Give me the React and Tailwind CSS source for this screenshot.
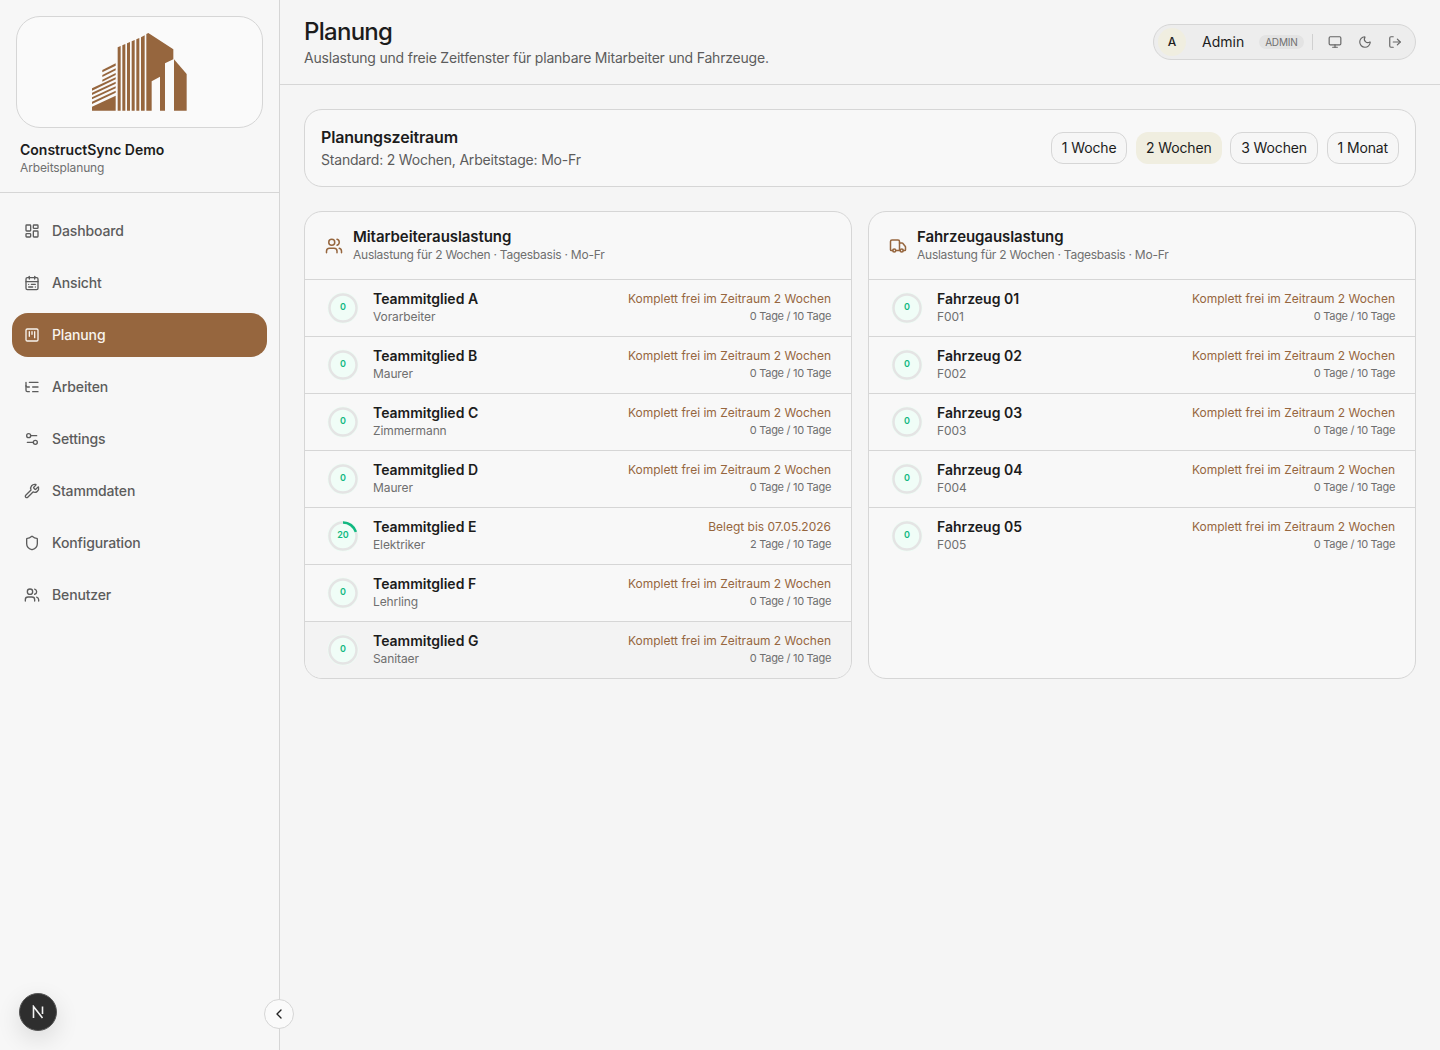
import React from "react";
import {
  LayoutDashboard,
  CalendarRange,
  SquareKanban,
  ListTree,
  Settings2,
  Wrench,
  Shield,
  Users,
  Truck,
  Monitor,
  Moon,
  LogOut,
  ChevronLeft,
} from "lucide-react";

const navItems = [
  { label: "Dashboard", icon: LayoutDashboard },
  { label: "Ansicht", icon: CalendarRange },
  { label: "Planung", icon: SquareKanban, active: true },
  { label: "Arbeiten", icon: ListTree },
  { label: "Settings", icon: Settings2 },
  { label: "Stammdaten", icon: Wrench },
  { label: "Konfiguration", icon: Shield },
  { label: "Benutzer", icon: Users },
];

const ranges = [
  { label: "1 Woche" },
  { label: "2 Wochen", active: true },
  { label: "3 Wochen" },
  { label: "1 Monat" },
];

const FREE = "Komplett frei im Zeitraum 2 Wochen";

const members = [
  { name: "Teammitglied A", sub: "Vorarbeiter", status: FREE, days: 0, pct: 0 },
  { name: "Teammitglied B", sub: "Maurer", status: FREE, days: 0, pct: 0 },
  { name: "Teammitglied C", sub: "Zimmermann", status: FREE, days: 0, pct: 0 },
  { name: "Teammitglied D", sub: "Maurer", status: FREE, days: 0, pct: 0 },
  { name: "Teammitglied E", sub: "Elektriker", status: "Belegt bis 07.05.2026", days: 2, pct: 20 },
  { name: "Teammitglied F", sub: "Lehrling", status: FREE, days: 0, pct: 0 },
  { name: "Teammitglied G", sub: "Sanitaer", status: FREE, days: 0, pct: 0, hover: true },
];

const vehicles = [
  { name: "Fahrzeug 01", sub: "F001", status: FREE, days: 0, pct: 0 },
  { name: "Fahrzeug 02", sub: "F002", status: FREE, days: 0, pct: 0 },
  { name: "Fahrzeug 03", sub: "F003", status: FREE, days: 0, pct: 0 },
  { name: "Fahrzeug 04", sub: "F004", status: FREE, days: 0, pct: 0 },
  { name: "Fahrzeug 05", sub: "F005", status: FREE, days: 0, pct: 0 },
];

function Logo() {
  return (
    <svg width="120" height="100" viewBox="0 6 360 300" fill="#96663e">
      {/* left stepped block */}
      <polygon points="67,150 107,130 107,137 67,157" />
      <polygon points="67,165 107,145 107,151 67,171" />
      <polygon points="67,179 107,159 107,165 67,185" />
      <polygon points="36,205 107,172 107,178 36,212" />
      <polygon points="36,218 107,185 107,191 36,225" />
      <polygon points="36,232 107,199 107,205 36,238" />
      <polygon points="36,245 107,212 107,218 36,252" />
      <polygon points="36,260 107,227 107,272 36,272" />
      {/* vertical stripes */}
      <polygon points="113,82 122,78 122,272 113,272" />
      <polygon points="127,76 136,72 136,272 127,272" />
      <polygon points="141,70 150,66 150,272 141,272" />
      <polygon points="155,64 164,60 164,272 155,272" />
      <polygon points="169,58 178,54 178,272 169,272" />
      <polygon points="183,52 194,46 194,272 183,272" />
      {/* main tower */}
      <polygon points="199,42 205,39 280,88 280,118 255,130 255,272 240,272 240,170 215,184 215,272 199,272" />
      <polygon points="282,118 320,162 320,272 282,272" />
    </svg>
  );
}

function Ring({ pct }) {
  const r = 13.5;
  const len = 2 * Math.PI * r;
  return (
    <div className="relative h-8 w-8 shrink-0">
      <svg width="32" height="32" viewBox="0 0 32 32" className="-rotate-90">
        <circle cx="16" cy="16" r="15.5" fill="#eefcf5" />
        <circle cx="16" cy="16" r={r} fill="#f0fdf7" stroke="#e4e4e4" strokeWidth="2.5" />
        {pct > 0 && (
          <circle
            cx="16"
            cy="16"
            r={r}
            fill="none"
            stroke="#10b981"
            strokeWidth="2.5"
            strokeDasharray={`${(len * pct) / 100} ${len}`}
          />
        )}
      </svg>
      <span className="absolute inset-0 flex items-center justify-center pb-[2px] text-[9px] font-semibold text-[#10b981]">
        {pct}
      </span>
    </div>
  );
}

function Row({ item, last }) {
  return (
    <div
      className={`flex items-center justify-between pl-[22px] pr-5 ${
        last ? "h-14" : "h-[57px] border-b border-[#d6d6d6]"
      } ${item.hover ? "rounded-b-[18px] bg-[#f3f3f3]" : ""}`}
    >
      <div className="flex items-center gap-[14px]">
        <Ring pct={item.pct} />
        <div>
          <p className="mb-[2px] text-sm leading-[16px] font-semibold text-[#1c1c1c]">{item.name}</p>
          <p className="text-xs leading-[16px] tracking-[-0.1px] text-[#6f6f6f]">{item.sub}</p>
        </div>
      </div>
      <div className="pb-[2px] text-right">
        <p className="text-xs leading-[16px] text-[#96663e]">{item.status}</p>
        <p className="mt-[2px] text-[11px] leading-[14px] tracking-[-0.3px] text-[#6f6f6f]">
          {item.days} Tage / 10 Tage
        </p>
      </div>
    </div>
  );
}

function LoadCard({ title, icon: Icon, items }) {
  return (
    <div className="overflow-hidden rounded-[18px] border border-[#d6d6d6] bg-[#f8f8f8]">
      <div className="flex h-[68px] items-center gap-[10px] border-b border-[#d6d6d6] px-5">
        <Icon size={18} className="text-[#96663e]" />
        <div className="pb-[2px]">
          <h2 className="text-[15px] leading-[20px] font-semibold tracking-[-0.005em] text-[#1c1c1c]">{title}</h2>
          <p className="text-xs leading-[16px] tracking-[-0.25px] text-[#6f6f6f]">
            Auslastung für 2 Wochen · Tagesbasis · Mo-Fr
          </p>
        </div>
      </div>
      {items.map((item, idx) => (
        <Row key={item.name} item={item} last={idx === items.length - 1} />
      ))}
    </div>
  );
}

export default function App() {
  return (
    <div className="flex h-screen overflow-hidden bg-[#f5f5f5] font-['Inter',sans-serif]">
      {/* Sidebar */}
      <aside className="relative flex w-[280px] shrink-0 flex-col border-r border-[#d6d6d6] bg-[#f7f7f7]">
        <div className="h-[193px] border-b border-[#d6d6d6] px-4 pt-4">
          <div className="flex h-[112px] items-center justify-center rounded-[24px] border border-[#d6d6d6] bg-[#fafafa]">
            <Logo />
          </div>
          <p className="mt-[13px] px-1 text-sm leading-[18px] font-semibold text-[#1c1c1c]">ConstructSync Demo</p>
          <p className="px-1 text-xs leading-[18px] tracking-[-0.01em] text-[#6f6f6f]">Arbeitsplanung</p>
        </div>

        <nav className="flex flex-col gap-2 px-3 pt-4">
          {navItems.map((item) => (
            <div
              key={item.label}
              className={`flex h-11 items-center gap-3 rounded-2xl px-3 text-sm font-medium tracking-[-0.01em] ${
                item.active ? "bg-[#96663e] text-[#f8f4ee]" : "text-[#5c5c5c]"
              }`}
            >
              <item.icon size={16} />
              {item.label}
            </div>
          ))}
        </nav>

        {/* dev indicator */}
        <div className="absolute bottom-[19px] left-[19px] flex h-[38px] w-[38px] items-center justify-center rounded-full border border-[#555] bg-[#2e2e2e] shadow-[0_8px_24px_rgba(0,0,0,0.12)]">
          <svg width="14" height="14" viewBox="0 0 14 14" fill="none" stroke="#f2f2f2" strokeWidth="1.6">
            <path d="M2.5 13V1.5L11.5 13" />
            <path d="M11.5 1.5V9" />
          </svg>
        </div>

        <button className="absolute bottom-[21px] right-[-15px] z-10 flex h-[30px] w-[30px] items-center justify-center rounded-full border border-[#d6d6d6] bg-[#fafafa] text-[#222]">
          <ChevronLeft size={16} />
        </button>
      </aside>

      <div className="min-w-0 flex-1">
        {/* Header */}
        <header className="flex h-[85px] items-center justify-between border-b border-[#d6d6d6] px-6 pb-[1px]">
          <div>
            <h1 className="text-2xl leading-[32px] font-medium tracking-[-0.03em] text-[#1c1c1c]">Planung</h1>
            <p className="text-sm leading-[20px] tracking-[-0.2px] text-[#5c5c5c]">
              Auslastung und freie Zeitfenster für planbare Mitarbeiter und Fahrzeuge.
            </p>
          </div>
          <div className="flex h-9 w-[263px] items-center rounded-full border border-[#d6d6d6] bg-[#ededed] pl-1">
            <div className="flex h-7 w-7 items-center justify-center rounded-full bg-[#f0eee0] text-xs font-medium text-[#1c1c1c]">
              A
            </div>
            <span className="ml-4 text-sm text-[#1c1c1c]">Admin</span>
            <span className="ml-[15px] rounded-full bg-[#e3e3e3] px-[6px] text-[10px] leading-[14px] tracking-[-0.2px] text-[#6f6f6f]">
              ADMIN
            </span>
            <span className="ml-2 h-4 w-px bg-[#d0d0d0]" />
            <div className="ml-[15px] flex items-center gap-4 text-[#666]">
              <Monitor size={14} />
              <Moon size={14} />
              <LogOut size={14} />
            </div>
          </div>
        </header>

        <main className="flex flex-col gap-6 px-6 pt-6">
          {/* Period */}
          <section className="flex h-[78px] items-center justify-between rounded-[18px] border border-[#d6d6d6] bg-[#f8f8f8] px-4">
            <div>
              <h2 className="mb-[2px] text-base leading-[22px] font-semibold tracking-[-0.01em] text-[#1c1c1c]">
                Planungszeitraum
              </h2>
              <p className="text-sm leading-[20px] tracking-[-0.2px] text-[#5c5c5c]">
                Standard: 2 Wochen, Arbeitstage: Mo-Fr
              </p>
            </div>
            <div className="flex items-center gap-[8.67px]">
              {ranges.map((r) => (
                <button
                  key={r.label}
                  className={`h-8 rounded-xl px-[10px] text-sm tracking-[-0.01em] text-[#1c1c1c] ${
                    r.active ? "bg-[#f0eee0]" : "border border-[#d6d6d6] bg-[#f6f6f6]"
                  }`}
                >
                  {r.label}
                </button>
              ))}
            </div>
          </section>

          <section className="grid grid-cols-2 gap-4">
            <LoadCard title="Mitarbeiterauslastung" icon={Users} items={members} />
            <LoadCard title="Fahrzeugauslastung" icon={Truck} items={vehicles} />
          </section>
        </main>
      </div>
    </div>
  );
}
